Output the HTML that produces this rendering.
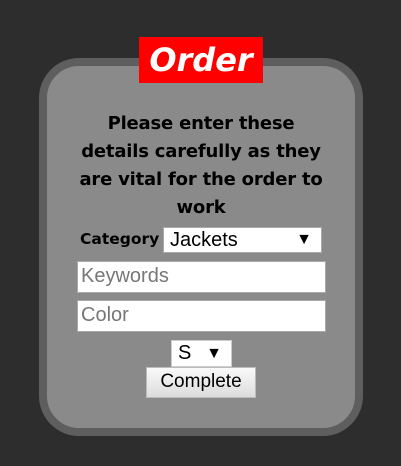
<!DOCTYPE html><html><head><style>
body{margin:0;width:401px;height:466px;background:#2d2d2d;position:relative;font-family:"DejaVu Sans","Liberation Sans",sans-serif;overflow:hidden}
.box{position:absolute;left:39px;top:58px;width:308px;height:362px;border:8px solid #5e5e5e;border-radius:40px;background:#8a8a8a}
.t{position:absolute;left:139px;top:37px;width:124px;height:46px;background:#f00;color:#fff;font:italic bold 32px "DejaVu Sans",sans-serif;text-align:center;line-height:46px}
.p{position:absolute;left:40px;top:110px;width:322px;text-align:center;font-weight:bold;font-size:18px;line-height:28px;color:#000;letter-spacing:-0.2px;white-space:nowrap}
.a{position:absolute;background:#fff;border:1px solid #aaa;box-sizing:border-box;font-family:"Liberation Sans",sans-serif;font-size:20px;line-height:28px;padding-left:6px}
.g{color:#777;padding-left:3px}
.ar{position:absolute;right:9px;top:0;font-size:16px}
</style></head><body>
<div class="box"></div>
<div class="t">Order</div>
<div class="p">Please enter these<br>details carefully as they<br>are vital for the order to<br>work</div>
<div style="position:absolute;left:80px;top:230px;font-weight:bold;font-size:15.5px">Category</div>
<div class="a" style="left:163px;top:227px;width:159px;height:26px;line-height:24px">Jackets<span class="ar">▼</span></div>
<div class="a g" style="left:77px;top:261px;width:249px;height:32px">Keywords</div>
<div class="a g" style="left:77px;top:300px;width:249px;height:32px">Color</div>
<div class="a" style="left:171px;top:340px;width:61px;height:27px;line-height:25px;border-color:#ccc">S<span class="ar">▼</span></div>
<div class="a" style="left:146px;top:367px;width:110px;height:31px;padding:0;text-align:center;background:linear-gradient(#fafafa,#ddd);border-color:#bbb;font-size:19px">Complete</div>
</body></html>
